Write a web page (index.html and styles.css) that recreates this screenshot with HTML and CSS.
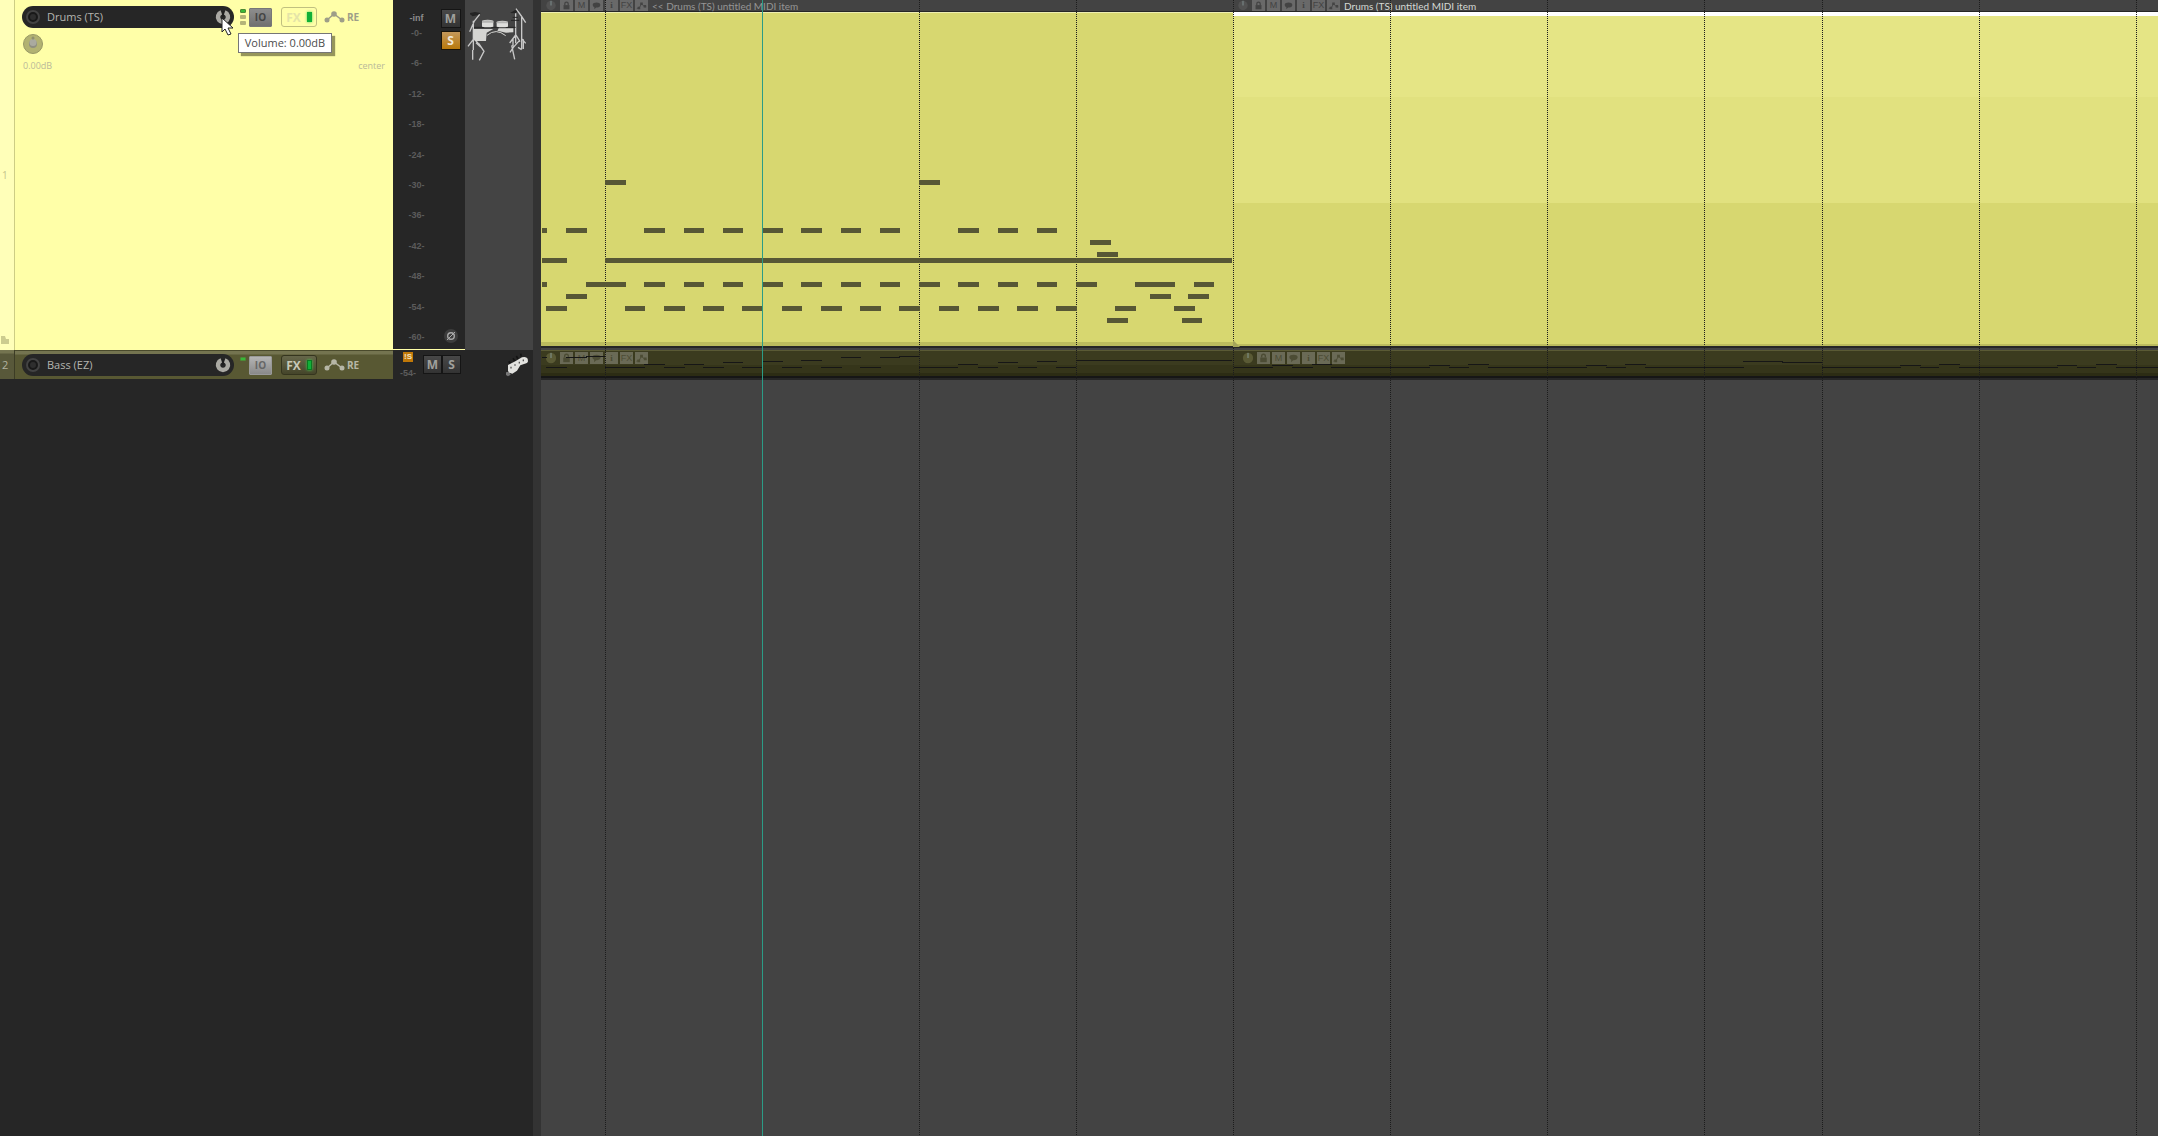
FILE: index.html
```html
<!DOCTYPE html>
<html lang="en">
<head>
    <meta charset="UTF-8">
    <meta name="viewport" content="width=device-width, initial-scale=1.0">
    <title>Arrange view</title>
    <link rel="stylesheet" href="styles.css">
</head>
<body>
    <svg class="defs">
        <symbol id="i-lock" viewBox="0 0 13 13"><path d="M4.500 6V4.500a2 2 0 0 1 4 0V6" fill="none" stroke="currentColor" stroke-width="1.500"/><rect x="3" y="6" width="7" height="5" fill="currentColor"/></symbol>
        <symbol id="i-note" viewBox="0 0 13 13"><path d="M2 5.500C2 2 11 2 11 5.500S7 9 6 9L4 11V8.500C3 8 2 7 2 5.500z" fill="currentColor"/></symbol>
        <symbol id="i-env" viewBox="0 0 13 13"><path d="M1 10L4 9 6.500 4.500 10 8h2" fill="none" stroke="currentColor"/><path d="M2 8h3v3H2zM5 3h3v3H5zM9 6h3v3H9z" fill="currentColor"/></symbol>
        <symbol id="i-knob" viewBox="0 0 14 14"><circle cx="7" cy="7" r="6" fill="currentColor"/><path d="M7 1v6" class="needle"/></symbol>
        <symbol id="i-rec" viewBox="0 0 16 16"><circle cx="8" cy="8" r="7" fill="#434343"/><circle cx="8" cy="8" r="4" fill="#2e2e2e" stroke="#191919" stroke-width="2"/></symbol>
        <symbol id="i-vol" viewBox="0 0 16 16"><path d="M6.300 3.300a5 5 0 1 0 3.400 0" fill="none" stroke="#aaa9a3" stroke-width="4.500"/><path d="M8 2v6" stroke="#1e1e1e" stroke-width="1.500"/></symbol>
        <symbol id="i-trim" viewBox="0 0 21 12"><path d="M3 9L10 3l8 6" fill="none" stroke="currentColor" stroke-width="1.500"/><circle cx="3" cy="9" r="2.500" fill="currentColor"/><circle cx="10" cy="3" r="2.800" fill="currentColor"/><circle cx="18" cy="9" r="2.500" fill="currentColor"/></symbol>
    </svg>

    <div class="app">
        <div class="tcp">
            <div class="track drums">
                <div class="number"><span>1</span>
                    <svg class="folder" width="9" height="8"><path d="M1 0h4l1 3h3v5H1z" fill="#cccc8f"/></svg>
                </div>
                <div class="panel">
                    <div class="controls">
                        <div class="name">
                            <button aria-label="Record arm"><svg width="16" height="16"><use href="#i-rec"/></svg></button>
                            <span>Drums (TS)</span>
                            <button aria-label="Volume"><svg width="16" height="16"><use href="#i-vol"/></svg></button>
                        </div>
                        <div class="leds"><i class="on"></i><i></i><i></i></div>
                        <button class="io">IO</button>
                        <button class="fx">FX<i></i></button>
                        <button class="env"><svg width="21" height="12"><use href="#i-trim"/></svg>RE</button>
                    </div>
                    <button class="pan" aria-label="Pan"><svg width="22" height="22"><circle cx="11" cy="11" r="9.500" fill="#b2b272" stroke="#989866"/><circle cx="11" cy="11" r="4" fill="#8f8f80"/><circle cx="11" cy="9.500" r="3.500" fill="#aaaa9f"/><circle cx="11" cy="5" r="1.500" fill="#8f8f70"/></svg></button>
                    <div class="values"><span>0.00dB</span><span>center</span></div>
                </div>
                <div class="meter">
                    <div class="scale">
                        <b>-inf</b>
                        <div><span>-0-</span><span>-6-</span><span>-12-</span><span>-18-</span><span>-24-</span><span>-30-</span><span>-36-</span><span>-42-</span><span>-48-</span><span>-54-</span><span>-60-</span></div>
                    </div>
                    <div class="buttons">
                        <button class="ms">M</button>
                        <button class="ms solo">S</button>
                        <button class="phase" aria-label="Phase"><svg width="16" height="16"><circle cx="8" cy="8" r="7" fill="#3d3d3d"/><circle cx="8" cy="8" r="3.300" fill="none" stroke="#aaa" stroke-width="1.400"/><path d="M4 12l8-8" stroke="#aaa"/></svg></button>
                    </div>
                </div>
                <div class="icon">
                    <svg width="68" height="64" viewBox="255 0 204 192">
                        <path d="M270 39l15-3 17 3-8 6-16 4-8-6zM390 39l22-13 4 6-10 8z" fill="#242424"/>
                        <path d="M299 43L283 63 269 95M280 62V150M280 118L264 139M283 117L296 132M278 150V179M296 130L312 154 298 181M288 128L302 141M407 40V130M408 26L424 48 437 68M425 48V148M407 105L389 129M408 105L420 125M425 116L437 130M418 122L400 142M395 136L404 178M390 157L402 139M414 142L425 149M399 114V139M430 118V147" fill="none" stroke="#c8c8c8" stroke-width="4"/>
                        <path d="M393 61h25M398 52h15" stroke="#252525" stroke-width="3"/>
                        <path d="M282 82h125" stroke="#252525" stroke-width="3"/>
                        <path d="M306 62q17-5 34 0v18q-17 4-34 0zM350 65q17-5 34 0v15q-17 4-34 0z" fill="#dededb"/>
                        <path d="M306 63q17-5 34 0v5h-34zM350 66q17-5 34 0v4h-34z" fill="#b4b4b2"/>
                        <path d="M280 87h60l-20 11-2 25h-33l-5-8zM356 85h44v12l-22 1-26-6z" fill="#d5d5d2"/>
                        <path d="M321 106q27-23 56 1" fill="none" stroke="#d5d5d2" stroke-width="3"/>
                    </svg>
                </div>
            </div>

            <div class="track bass">
                <div class="number"><span>2</span></div>
                <div class="panel">
                    <div class="controls">
                        <div class="name">
                            <button aria-label="Record arm"><svg width="16" height="16"><use href="#i-rec"/></svg></button>
                            <span>Bass (EZ)</span>
                            <button aria-label="Volume"><svg width="16" height="16"><use href="#i-vol"/></svg></button>
                        </div>
                        <div class="leds"><i class="on"></i></div>
                        <button class="io">IO</button>
                        <button class="fx">FX<i></i></button>
                        <button class="env"><svg width="21" height="12"><use href="#i-trim"/></svg>RE</button>
                    </div>
                </div>
                <div class="meter">
                    <div class="mini"><b>!S</b><span>-54-</span></div>
                    <div class="pair"><button class="ms">M</button><button class="ms">S</button></div>
                </div>
                <div class="icon">
                    <svg width="24" height="26" viewBox="375 155 72 78">
                        <path d="M386 183l6 7M399 174l6 9M409 167l5 9M422 160l2 9" stroke="#141414" stroke-width="5"/>
                        <path d="M378 216l9-2 5 9-8 5-6-4z" fill="#777"/>
                        <path d="M384 212V194l22-11 20-12q12-4 17 4l1 8q-1 6-12 8l-11 4-10 16-14 9-9-3z" fill="#e2e2df"/>
                        <path d="M391 202h4M403 194h4M416 187h4M428 180h4" stroke="#555" stroke-width="5"/>
                    </svg>
                </div>
            </div>

            <div class="tooltip">Volume: 0.00dB</div>
            <svg class="cursor" width="13" height="19"><path d="M1 1v14l3-3 3 6 3-1-3-6h5z" fill="#fff" stroke="#222"/></svg>
        </div>

        <div class="splitter"></div>

        <div class="arrange">
            <div class="lane lane-drums">
                <div class="item">
                    <div class="bar">
                        <svg class="knob" width="14" height="14"><use href="#i-knob"/></svg>
                        <i><svg><use href="#i-lock"/></svg></i><i>M</i><i><svg><use href="#i-note"/></svg></i><i class="info">i</i><i>FX</i><i><svg><use href="#i-env"/></svg></i>
                        <span>&lt;&lt; Drums (TS) untitled MIDI item</span>
                    </div>
                    <div class="body"></div>
                </div>
                <div class="item selected">
                    <div class="bar">
                        <svg class="knob" width="14" height="14"><use href="#i-knob"/></svg>
                        <i><svg><use href="#i-lock"/></svg></i><i>M</i><i><svg><use href="#i-note"/></svg></i><i class="info">i</i><i>FX</i><i><svg><use href="#i-env"/></svg></i>
                        <span>Drums (TS) untitled MIDI item</span>
                    </div>
                    <div class="body"></div>
                </div>
            </div>
            <div class="lane lane-bass">
                <div class="item">
                    <div class="bar">
                        <svg class="knob" width="14" height="14"><use href="#i-knob"/></svg>
                        <i><svg><use href="#i-lock"/></svg></i><i>M</i><i><svg><use href="#i-note"/></svg></i><i class="info">i</i><i>FX</i><i><svg><use href="#i-env"/></svg></i>
                    </div>
                </div>
                <div class="item second">
                    <div class="bar">
                        <svg class="knob" width="14" height="14"><use href="#i-knob"/></svg>
                        <i><svg><use href="#i-lock"/></svg></i><i>M</i><i><svg><use href="#i-note"/></svg></i><i class="info">i</i><i>FX</i><i><svg><use href="#i-env"/></svg></i>
                    </div>
                </div>
            </div>

            <!-- grid, midi notes and play cursor -->
            <svg class="canvas">
                <g id="grid"></g>
                <path d="M692 340v7h7z" fill="#a5a55a"/>
                <g id="notes"></g>
                <rect x="221" y="0" width="1" height="100%" fill="#2b9c86"/>
            </svg>
        </div><!--arrange-->
    </div><!--app-->

    <script src="script.js"></script>
</body>
</html>
```
FILE: styles.css
```css
*{
    box-sizing: border-box;
}

body{
    margin: 0;
    background: #262626;
    font-family: "Open Sans", "Noto Sans", sans-serif;
    font-size: 12px;
}

button{
    padding: 0;
    border: 0;
    background: none;
    font-family: inherit;
    display: flex;
    align-items: center;
    justify-content: center;
}

svg{
    display: block;
    flex: none;
}

.defs{
    display: none;
}

.app{
    display: flex;
    min-height: 100vh;
}

/* track panels */

.tcp{
    width: 533px;
    flex: none;
    position: relative;
    background: #262626;
}

.track{
    display: flex;
}

.drums{
    height: 350px;
}

.bass{
    height: 29px;
}

.number{
    width: 15px;
    flex: none;
    position: relative;
    display: flex;
    align-items: center;
    padding-left: 2px;
    font-size: 10px;
    background: #ffffb9;
    color: #c4c48c;
    border-right: 1px solid #cdcd84;
}

.folder{
    position: absolute;
    left: 0;
    bottom: 6px;
}

.panel{
    flex: 1;
    padding: 6px 8px 0 7px;
    background: #ffffa8;
}

.controls{
    display: flex;
    align-items: center;
    height: 22px;
}

.name{
    display: flex;
    align-items: center;
    width: 212px;
    height: 22px;
    padding: 0 3px;
    border-radius: 11px;
    background: #262626;
    color: #b5b5b0;
    font-size: 11px;
}

.name span{
    flex: 1;
    padding-left: 6px;
    line-height: 20px;
}

.leds{
    display: flex;
    flex-direction: column;
    gap: 2px;
    width: 6px;
    height: 16px;
    margin: 0 3px 0 6px;
}

.leds i{
    height: 4px;
    border-radius: 1px;
    background: #b4b478;
}

.leds .on{
    background: #38b838;
    border: 1px solid #4b8a35;
}

.io{
    width: 23px;
    height: 19px;
    background: linear-gradient(#8d8d8d, #707070);
    border: 1px solid #777;
    border-radius: 1px;
    color: #444;
    font-size: 10px;
    font-weight: bold;
}

.fx{
    width: 36px;
    height: 20px;
    margin-left: 9px;
    gap: 6px;
    border: 1px solid #c0c080;
    border-radius: 3px;
    color: #e4e4a8;
    font-size: 12px;
    font-weight: bold;
}

.fx i{
    width: 5px;
    height: 10px;
    background: #10b038;
    box-shadow: 0 0 3px #40d850;
}

.env{
    margin-left: 7px;
    gap: 2px;
    color: #9e9e88;
    font-size: 10px;
    font-weight: bold;
}

.pan{
    margin-top: 5px;
}

.values{
    display: flex;
    justify-content: space-between;
    padding-left: 1px;
    margin-top: 4px;
    font-size: 9px;
    line-height: 14px;
    color: #b9b99a;
}

.meter{
    width: 72px;
    flex: none;
    display: flex;
    background: #262626;
}

.drums .meter{
    border-bottom: 1px solid #ffffa8;
}

.scale{
    width: 47px;
    padding-top: 12px;
    text-align: center;
    font: bold 9px/12px "Liberation Sans", Arial, sans-serif;
    color: #5c5c5c;
}

.scale b{
    display: block;
    color: #8c8c8c;
}

.scale div{
    display: flex;
    flex-direction: column;
    justify-content: space-between;
    height: 316px;
    margin-top: 3px;
}

.buttons{
    display: flex;
    flex-direction: column;
    align-items: center;
    gap: 3px;
    width: 21px;
    padding: 9px 0 5px;
}

.ms{
    width: 20px;
    height: 19px;
    border: 1px solid #151515;
    background: linear-gradient(#484848, #333);
    color: #a0a09c;
    font-size: 12px;
    line-height: 16px;
    font-weight: bold;
}

.solo{
    background: linear-gradient(#c4985a, #b8790c);
    border-color: #1a1408;
    color: #f0e8d8;
}

.phase{
    margin-top: auto;
}

.icon{
    width: 68px;
    flex: none;
    background: #444;
}

.bass .number{
    background: linear-gradient(#747450 0 3px, #58583a 4px);
    border-color: #3c3c25;
    color: #b2b2a0;
    font-size: 11px;
}

.bass .panel{
    padding-top: 3px;
    background: linear-gradient(#747450 0 3px, #585833 4px);
    border-top: 1px solid #4a4a2c;
}

.bass .io{
    background: linear-gradient(#b4b4b4, #8a8a8a);
    border-color: #999;
    color: #666;
}

.bass .fx{
    background: linear-gradient(#66664a, #45452a);
    border-color: #35351e;
    color: #c8c8b8;
}

.bass .fx i{
    border: 1px solid #0a7a20;
}

.bass .env{
    color: #b6b6a6;
}

.mini{
    display: flex;
    flex-direction: column;
    align-items: center;
    width: 30px;
    gap: 5px;
    padding-top: 2px;
    font: bold 9px/12px "Liberation Sans", Arial, sans-serif;
    color: #5c5c5c;
}

.mini b{
    width: 10px;
    height: 10px;
    line-height: 10px;
    font-size: 8px;
    text-align: center;
    background: #c07808;
    color: #f0e0c0;
}

.pair{
    display: flex;
    margin-top: 5px;
}

.pair .ms{
    width: 19px;
}

.bass .icon{
    background: #262626;
    padding: 2px 0 0 40px;
}

.tooltip{
    position: absolute;
    left: 238px;
    top: 33px;
    width: 94px;
    height: 20px;
    border: 1px solid #767676;
    background: #fff;
    box-shadow: 3px 3px 1px rgba(80, 80, 40, 0.6);
    color: #4c4c4c;
    line-height: 18px;
    text-align: center;
    font-size: 11px;
}

.cursor{
    position: absolute;
    left: 221px;
    top: 17px;
}

.splitter{
    width: 8px;
    flex: none;
    background: #333;
}

/* arrange */

.arrange{
    flex: 1;
    min-width: 0;
    position: relative;
    overflow: hidden;
    background: #434343;
}

.lane{
    display: flex;
}

.item{
    width: 692px;
    flex: none;
}

.item + .item{
    flex: 1;
    min-width: 0;
}

.bar{
    display: flex;
    align-items: flex-start;
    gap: 2px;
    height: 12px;
    padding-left: 3px;
    border-bottom: 1px solid #262626;
    color: #434343;
}

.bar .knob{
    height: 11px;
    color: #525252;
}

.needle{
    stroke: #8aa0a0;
}

.bar i{
    width: 13px;
    height: 11px;
    flex: none;
    background: #696969;
    font-family: "Liberation Sans", Arial, sans-serif;
    font-size: 9px;
    font-style: normal;
    line-height: 11px;
    text-align: center;
}

.bar i svg{
    width: 13px;
    height: 11px;
}

.bar .info{
    font-family: "Liberation Serif", serif;
    font-weight: bold;
}

.bar span{
    padding-left: 2px;
    font-family: Lato, sans-serif;
    font-size: 10px;
    line-height: 12px;
    white-space: nowrap;
    color: #959595;
}

.selected .bar span{
    color: #d4d8d4;
}

.lane-drums .body{
    height: 334px;
    background: #d7d770;
    border-top: 1px solid #eeeeb0;
    border-bottom: 4px solid #bcbc5e;
}

.lane-drums .selected .body{
    border-top: 4px solid #fff;
    border-bottom: 2px solid #bcbc5e;
    background: linear-gradient(#e5e585 0 81px, #e1e17f 81px 187px, #d7d770 187px);
}

.lane-drums{
    height: 348px;
    border-bottom: 2px solid #262626;
}

.lane-bass{
    height: 32px;
    border-top: 2px solid #434343;
    border-bottom: 2px solid #262626;
}

.lane-bass .item{
    background: linear-gradient(#3b3b1f 0 14px, #35351a 14px 22px, #2c2c14 22px);
    border-top: 1px solid #5a5a35;
    border-bottom: 2px solid #161616;
}

.lane-bass .bar{
    height: 14px;
    padding-top: 1px;
    border: 0;
    color: #4c4c34;
}

.lane-bass .bar i{
    height: 12px;
    line-height: 12px;
    background: #6a6a56;
}

.lane-bass .bar svg{
    height: 12px;
}

.lane-bass .knob{
    color: #5a5a35;
}

.lane-bass .second .bar{
    padding-left: 8px;
}

.canvas{
    position: absolute;
    left: 0;
    top: 0;
    width: 100%;
    height: 100%;
}

.grid-line{
    stroke: #1c1c1c;
    stroke-dasharray: 1 1;
}
```
FILE: script.js
```js
var svg = 'http://www.w3.org/2000/svg';
var grid = document.getElementById('grid');
var notes = document.getElementById('notes');

var beats = [64, 378, 535, 692, 849, 1006, 1163, 1281, 1438, 1595];

// top of the row, then start and end of each note
var drums = [
    [180, 64,85, 378,399],
    [228, 1,6, 25,46, 103,124, 143,163, 182,202, 221,242, 260,281, 300,320, 339,359, 417,438, 457,477, 496,516],
    [240, 549,570],
    [252, 556,577],
    [258, 1,26, 64,691],
    [282, 1,6, 45,85, 103,124, 143,163, 182,202, 221,242, 260,281, 300,320, 339,359, 378,399, 417,438, 457,477, 496,516, 535,556, 594,634, 653,673],
    [294, 25,46, 609,630, 647,668],
    [306, 5,26, 84,104, 123,144, 162,183, 201,221, 241,261, 280,301, 319,340, 358,379, 398,418, 437,458, 476,497, 515,536, 574,595, 633,654],
    [318, 566,587, 641,661]
];

var bass = [
    [367, 5,26, 64,104, 123,144, 162,183, 201,221, 241,261, 280,301, 319,340, 378,417, 437,457, 477,496, 515,535, 693,732, 751,772, 790,889, 908,928, 947,1046, 1065,1085, 1104,1203, 1281,1360, 1379,1398, 1418,1517, 1536,1555, 1575,1617],
    [365, 731,752, 888,909, 1045,1066, 1359,1380, 1516,1536],
    [364, 103,124, 143,163, 417,437, 771,791, 927,948, 1084,1105, 1398,1419, 1555,1576],
    [362, 182,202, 457,477, 1241,1281],
    [361, 221,242, 496,516, 1202,1242],
    [360, 260,281, 535,691],
    [357, 1,6, 25,46, 300,320, 339,359],
    [356, 45,64, 358,378]
];

for(var i=0; i < beats.length; i++){
    var line = document.createElementNS(svg, 'line');
    line.setAttribute('class', 'grid-line');
    line.setAttribute('x1', beats[i] + 0.5);
    line.setAttribute('x2', beats[i] + 0.5);
    line.setAttribute('y1', 0);
    line.setAttribute('y2', '100%');
    grid.appendChild(line);
}

function drawNotes(rows, height, color){
    for(var i=0; i < rows.length; i++){
        for(var j=1; j < rows[i].length; j+=2){
            var rect = document.createElementNS(svg, 'rect');
            rect.setAttribute('x', rows[i][j]);
            rect.setAttribute('y', rows[i][0]);
            rect.setAttribute('width', rows[i][j+1] - rows[i][j]);
            rect.setAttribute('height', height);
            rect.setAttribute('fill', color);
            notes.appendChild(rect);
        }
    }
}

drawNotes(drums, 5, '#575735');
drawNotes(bass, 1, '#161616');
```
